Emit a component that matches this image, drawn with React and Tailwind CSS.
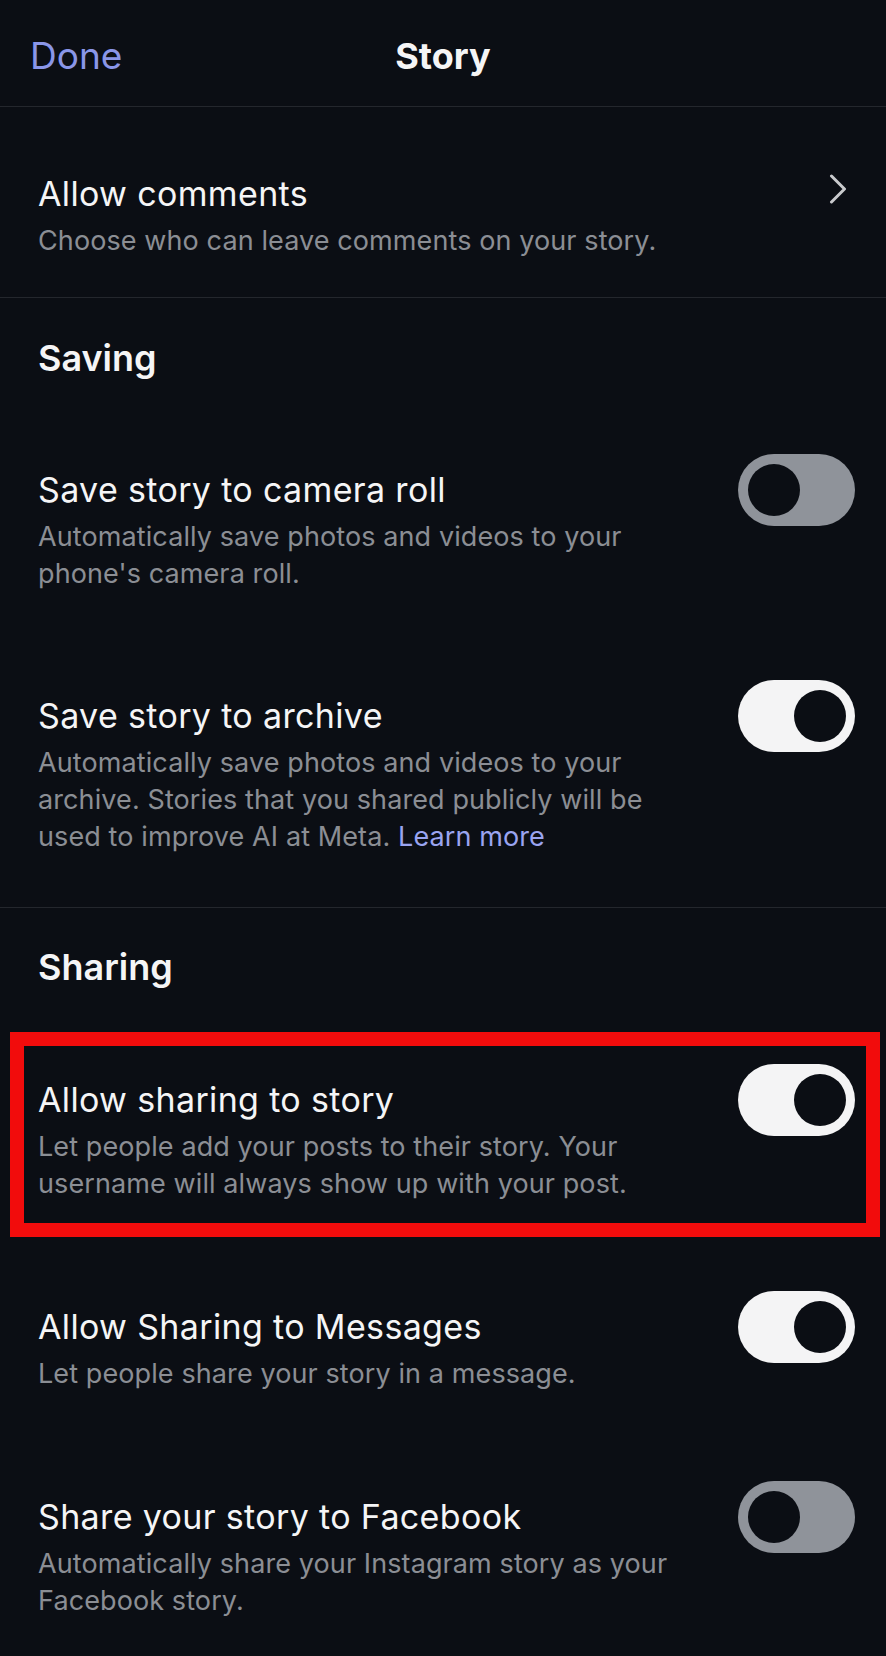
import React from 'react';

const FONT = { fontFamily: 'Inter, "Noto Sans", sans-serif' };

// iOS-style switch, purely visual
const Toggle = ({ on }) => (
  <div
    className={`relative w-[117px] h-[72px] rounded-full shrink-0 ${on ? 'bg-[#f4f4f5]' : 'bg-[#8f939a]'}`}
  >
    <div
      className={`absolute top-[10px] w-[52px] h-[52px] rounded-full bg-[#0b0e14] ${on ? 'right-[9px]' : 'left-[10px]'}`}
    />
  </div>
);

const Chevron = () => (
  <svg width="18" height="30" viewBox="0 0 18 30" fill="none" className="mr-[8px] mb-[10px]">
    <path d="M2.5 2 L15.5 15 L2.5 28" stroke="#c9cacd" strokeWidth="3" strokeLinecap="round" strokeLinejoin="round" />
  </svg>
);

const SettingRow = ({ title, children, right, className = '' }) => (
  <div className={`flex items-start ${className}`}>
    <div className="flex-1 min-w-0">
      <div className="text-[34px] leading-[44px] tracking-[0.35px] text-[#f5f5f6]">{title}</div>
      <div className="mt-[6px] text-[27px] leading-[37px] tracking-[0.1px] text-[#8b8e94] pr-[40px]">{children}</div>
    </div>
    <div className="h-[44px] flex items-center">{right}</div>
  </div>
);

const SectionTitle = ({ children }) => (
  <div className="text-[36px] leading-[44px] font-semibold text-[#f5f5f6]">{children}</div>
);

export default function App() {
  return (
    <div className="w-[886px] min-h-[1656px] bg-[#0b0e14] text-white" style={FONT}>
      {/* Header */}
      <div className="h-[107px] border-b border-[#24272d] flex items-center pt-[5px] px-[30px] relative">
        <span className="text-[37px] text-[#8a96e8]">Done</span>
        <span className="absolute left-0 right-0 text-center text-[36px] font-bold text-[#f5f5f6] pointer-events-none">
          Story
        </span>
      </div>

      {/* Comments */}
      <div className="border-b border-[#24272d] pt-[65px] pb-[38px] pl-[38px] pr-[31px]">
        <SettingRow title="Allow comments" right={<Chevron />}>
          Choose who can leave comments on your story.
        </SettingRow>
      </div>

      {/* Saving */}
      <div className="border-b border-[#24272d] pt-[38px] pb-[52px] pl-[38px] pr-[31px]">
        <SectionTitle>Saving</SectionTitle>
        <SettingRow className="mt-[88px]" title="Save story to camera roll" right={<Toggle on={false} />}>
          Automatically save photos and videos to your phone's camera roll.
        </SettingRow>
        <SettingRow className="mt-[102px]" title="Save story to archive" right={<Toggle on />}>
          Automatically save photos and videos to your archive. Stories that you shared publicly will be used to
          improve AI at Meta. <span className="text-[#9aa4f0]">Learn more</span>
        </SettingRow>
      </div>

      {/* Sharing */}
      <div className="pt-[37px] pb-[37px]">
        <div className="pl-[38px]">
          <SectionTitle>Sharing</SectionTitle>
        </div>

        <div className="mt-[43px] ml-[10px] mr-[6px] border-[14px] border-[#f20c0c] pt-[32px] pb-[21px] pl-[14px] pr-[11px]">
          <SettingRow title="Allow sharing to story" right={<Toggle on />}>
            Let people add your posts to their story. Your username will always show up with your post.
          </SettingRow>
        </div>

        <div className="pl-[38px] pr-[31px]">
          <SettingRow className="mt-[68px]" title="Allow Sharing to Messages" right={<Toggle on />}>
            Let people share your story in a message.
          </SettingRow>
          <SettingRow className="mt-[103px]" title="Share your story to Facebook" right={<Toggle on={false} />}>
            Automatically share your Instagram story as your Facebook story.
          </SettingRow>
        </div>
      </div>
    </div>
  );
}
